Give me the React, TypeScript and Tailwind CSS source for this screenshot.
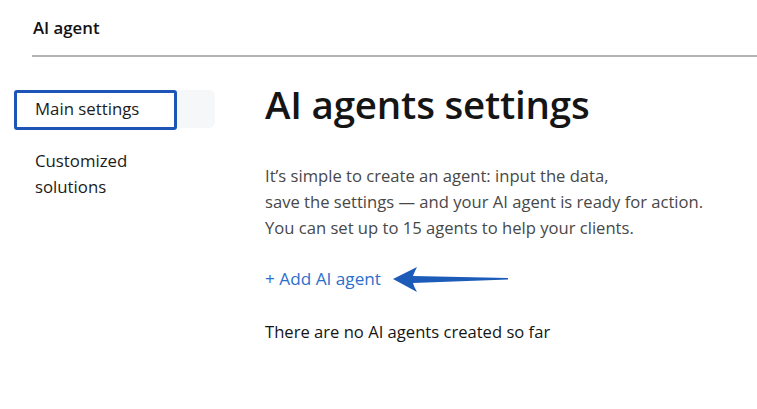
import React from "react";

export default function App() {
  return (
    <div className="w-[757px] h-[409px] bg-white overflow-hidden" style={{ fontFamily: '"Open Sans", "Noto Sans", sans-serif' }}>
      <div className="pl-8 pt-[17px]">
        <div className="text-[16.8px] font-semibold text-[#111] leading-[22px] pl-px">AI agent</div>
        <div className="mt-[16px] h-[2px] bg-[#b3b3b3]" />
      </div>
      <div className="flex">
        <div className="w-[251px] shrink-0 pl-[14px] pt-[33px]">
          <div className="relative w-[201px] h-[38px] rounded-[6px] bg-[#f6f7f9]">
            <div className="absolute left-0 top-0 w-[163px] h-[40px] border-[3px] border-[#1c55b5] rounded-[3px] bg-white" />
            <div className="relative pl-[21px] pt-[8px] text-[16.8px] leading-[22px] text-[#1b1b1b]">Main settings</div>
          </div>
          <div className="pl-[21px] mt-[20px] text-[16.8px] leading-[26px] text-[#1b1b1b]">
            Customized<br />solutions
          </div>
        </div>
        <div className="pt-[21px] pl-[14px]">
          <h1 className="text-[38.5px] font-semibold leading-[52px] text-[#151515] tracking-[-0.2px]">AI agents settings</h1>
          <p className="mt-[33px] text-[16.6px] leading-[26px] text-[#484848]">
            It’s simple to create an agent: input the data,<br />
            save the settings — and your AI agent is ready for action.<br />
            You can set up to 15 agents to help your clients.
          </p>
          <div className="mt-[23px] flex items-center gap-[11px]">
            <span className="text-[17.2px] leading-[22px] text-[#2b6fcb]">+ Add AI agent</span>
            <svg width="118" height="30" viewBox="0 0 118 30">
              <path d="M1 15 L25 3 Q22 9 21 12 L116 14 L116 15.5 L21 19 Q22 23 25 28 Z" fill="#1c5bb8" />
            </svg>
          </div>
          <div className="mt-[27px] text-[16.6px] leading-[22px] text-[#151515]">There are no AI agents created so far</div>
        </div>
      </div>
    </div>
  );
}
